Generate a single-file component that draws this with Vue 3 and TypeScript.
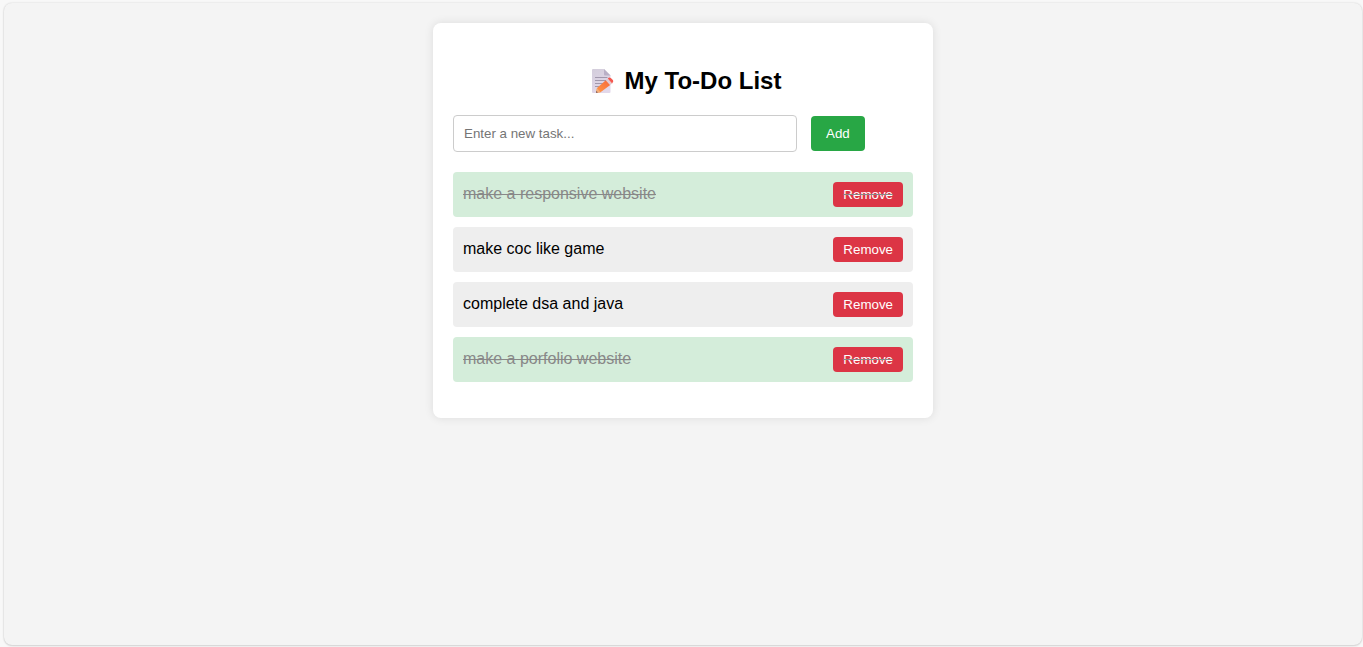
<script setup lang="ts">
import { ref } from 'vue'

interface Task {
  id: number
  text: string
  done: boolean
}

const tasks = ref<Task[]>([
  { id: 1, text: 'make a responsive website', done: true },
  { id: 2, text: 'make coc like game', done: false },
  { id: 3, text: 'complete dsa and java', done: false },
  { id: 4, text: 'make a porfolio website', done: true },
])
const draft = ref('')
let nextId = 5

function addTask(): void {
  const text = draft.value.trim()
  if (!text) return
  tasks.value.push({ id: nextId++, text, done: false })
  draft.value = ''
}

function removeTask(id: number): void {
  tasks.value = tasks.value.filter((task) => task.id !== id)
}
</script>

<template>
  <div class="page">
    <main class="card">
      <h1 class="title">
        <svg class="memo" viewBox="0 0 24 26" aria-hidden="true">
          <defs>
            <linearGradient id="paper" x1="0" y1="0" x2="0.4" y2="1">
              <stop offset="0" stop-color="#d3cddb" />
              <stop offset="1" stop-color="#e2d8ea" />
            </linearGradient>
            <linearGradient id="pencil" x1="0" y1="1" x2="1" y2="0">
              <stop offset="0" stop-color="#ff9a45" />
              <stop offset="1" stop-color="#f7683c" />
            </linearGradient>
          </defs>
          <path d="M2 1h11l6.5 6.5V24q0 1-1 1H2q-1 0-1-1V2q0-1 1-1z" fill="url(#paper)" />
          <path d="M13 1l6.5 6.5H14q-1 0-1-1z" fill="#b9b0c6" />
          <path d="M4 9.5h12.5M4 12.5h12M4 15.5h9M4 18.5h6" stroke="#a198ad" stroke-width="1" />
          <path d="M14.8 12.2l4.4 4.8L9.5 24.2 5 24.8l1-4.8z" fill="url(#pencil)" />
          <path d="M6 20l3.5 4.2-4.5.6z" fill="#f5ae78" />
          <path d="M5.4 23.1l1.4 1.5-1.8.2z" fill="#5b4654" />
          <path d="M14.8 12.2l2-1.7 4.3 4.9-1.9 1.6z" fill="#e3cbd2" />
          <path d="M16.8 10.5l.8-.7q1.2-.8 2.2.2l2.1 2.1q.9 1.2-.1 2.2l-.7 1.1z" fill="#f4584f" />
        </svg>
        <span>My To-Do List</span>
      </h1>

      <form class="entry" @submit.prevent="addTask">
        <input v-model="draft" class="field" type="text" placeholder="Enter a new task..." aria-label="New task" />
        <button class="add" type="submit">Add</button>
      </form>

      <ul class="tasks">
        <li v-for="task in tasks" :key="task.id" class="task" :class="{ done: task.done }">
          <span class="label" @click="task.done = !task.done">{{ task.text }}</span>
          <button class="remove" type="button" @click="removeTask(task.id)">Remove</button>
        </li>
      </ul>
    </main>
  </div>
</template>

<style>
body {
  background: #f8f8f8;
}
</style>

<style scoped>
.page {
  box-sizing: border-box;
  min-height: calc(100vh - 5px);
  margin: 3px 1px 2px 4px;
  padding: 20px;
  border-radius: 8px;
  background: #f4f4f4;
  box-shadow: 0 0 2px rgba(0, 0, 0, 0.15), 0 1px 2px rgba(0, 0, 0, 0.12);
  font-family: Arial, "Liberation Sans", sans-serif;
  display: flow-root;
}

.card {
  box-sizing: border-box;
  max-width: 500px;
  margin: 0 auto;
  padding: 20px;
  border-radius: 8px;
  background: #fff;
  box-shadow: 0 0 10px rgba(0, 0, 0, 0.1);
}

.title {
  display: flex;
  justify-content: center;
  align-items: center;
  gap: 10px;
  margin: 24px 0 20px;
  padding-left: 6px;
  font-size: 24px;
  line-height: 28px;
  font-weight: bold;
  color: #000;
}

.memo {
  width: 24px;
  height: 26px;
}

.entry {
  display: flex;
  align-items: center;
  gap: 14px;
}

.field {
  box-sizing: border-box;
  flex: 0 1 344px;
  min-width: 0;
  height: 37px;
  padding: 0 10px;
  border: 1px solid #ccc;
  border-radius: 4px;
  background: #fff;
  font-family: inherit;
}

.field::placeholder {
  color: #757575;
}

.add,
.remove {
  border: 0;
  border-radius: 4px;
  color: #fff;
  font-family: inherit;
  line-height: 15px;
  cursor: pointer;
}

.add {
  padding: 10px 15px;
  background: #28a745;
}

.tasks {
  display: flex;
  flex-direction: column;
  gap: 10px;
  margin: 20px 0 16px;
  padding: 0;
  list-style: none;
}

.task {
  display: flex;
  justify-content: space-between;
  align-items: flex-start;
  padding: 10px;
  border-radius: 4px;
  background: #eee;
  font-size: 16px;
  color: #000;
}

.label {
  line-height: 24px;
  cursor: pointer;
}

.done {
  background: #d4edda;
  color: #888;
}

.done .label {
  text-decoration: line-through;
}

.remove {
  padding: 5px 10px;
  background: #dc3545;
}

.done .remove {
  text-decoration: line-through #888;
}
</style>
